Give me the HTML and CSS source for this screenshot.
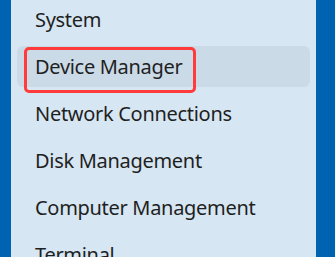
FILE: index.html
```html
<!DOCTYPE html>
<html lang="en">
  <head>
    <meta charset="UTF-8" />
    <meta name="viewport" content="width=device-width, initial-scale=1.0" />
    <title>Quick Link Menu</title>
    <link rel="stylesheet" href="styles.css">
  </head>
  <body>
    <div class="menu">
      <ul class="menu-list">
        <li class="menu-item">System</li>
        <li class="menu-item active">
          Device Manager
          <span class="callout"></span>
        </li>
        <li class="menu-item">Network Connections</li>
        <li class="menu-item">Disk Management</li>
        <li class="menu-item">Computer Management</li>
        <li class="menu-item">Terminal</li>
      </ul>
    </div>
  </body>
</html>
```

FILE: styles.css
```css
html,
body {
  height: 100%;
}
body {
  margin: 0;
  background-color: #0063b1;
  font-family: "Noto Sans", "Open Sans", sans-serif;
  overflow: hidden;
}
.menu {
  margin-left: 11px;
  width: 293px;
  height: 100%;
  padding: 0 6px;
  background-color: #d6e6f2;
}
.menu-list {
  list-style: none;
  margin: 0;
  padding: 0;
  position: relative;
  top: -1px;
}
.menu-item {
  position: relative;
  height: 41px;
  line-height: 41px;
  margin-bottom: 6px;
  padding-left: 18px;
  font-size: 20px;
  letter-spacing: -0.3px;
  color: #1f1f1f;
  border-radius: 6px;
  white-space: nowrap;
}
.menu-item.active {
  background-color: #cadae7;
}
.callout {
  position: absolute;
  left: 7px;
  top: 1px;
  width: 166px;
  height: 40px;
  border: 3px solid #ff3b3b;
  border-radius: 5px;
}
```
